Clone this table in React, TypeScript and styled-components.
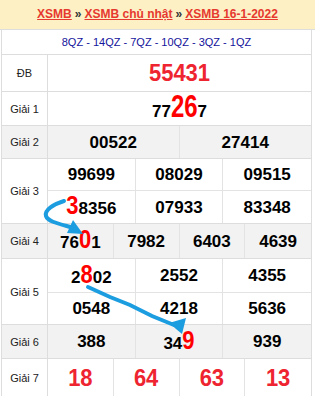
import styled, { createGlobalStyle } from "styled-components";

const GlobalStyle = createGlobalStyle`
  html, body {
    margin: 0;
    padding: 0;
    background: #ffffff;
  }
  body {
    font-family: "Liberation Sans", Arial, sans-serif;
  }
`;

type Prize = {
  label: string;
  cols: number;
  height: number;
  firstRow?: number;
  alt?: boolean;
  kind?: "db" | "g7";
  values: string[];
};

// so trong [] la chu so duoc to do, {} la to do va to hon
const prizes: Prize[] = [
  { label: "ĐB", cols: 1, height: 37, kind: "db", values: ["55431"] },
  { label: "Giải 1", cols: 1, height: 34, values: ["77{26}7"] },
  { label: "Giải 2", cols: 2, height: 33, alt: true, values: ["00522", "27414"] },
  {
    label: "Giải 3",
    cols: 3,
    height: 65,
    firstRow: 32,
    values: ["99699", "08029", "09515", "[3]8356", "07933", "83348"],
  },
  { label: "Giải 4", cols: 4, height: 35, alt: true, values: ["76[0]1", "7982", "6403", "4639"] },
  {
    label: "Giải 5",
    cols: 3,
    height: 66,
    firstRow: 34,
    values: ["2[8]02", "2552", "4355", "0548", "4218", "5636"],
  },
  { label: "Giải 6", cols: 3, height: 34, alt: true, values: ["388", "34[9]", "939"] },
  { label: "Giải 7", cols: 4, height: 38, kind: "g7", values: ["18", "64", "63", "13"] },
];

const renderNumber = (value: string) =>
  value.split(/(\[[0-9]+\]|\{[0-9]+\})/).map((part, idx) => {
    if (!part) return null;
    if (part.startsWith("[")) return <Hl key={idx}>{part.slice(1, -1)}</Hl>;
    if (part.startsWith("{")) return <Hl key={idx} $big>{part.slice(1, -1)}</Hl>;
    return <span key={idx}>{part}</span>;
  });

const App = () => {
  return (
    <Page>
      <GlobalStyle />
      <Header>
        <Crumb href="#">XSMB</Crumb>
        <Sep>»</Sep>
        <Crumb href="#">XSMB chủ nhật</Crumb>
        <Sep>»</Sep>
        <Crumb href="#">XSMB 16-1-2022</Crumb>
      </Header>
      <Table>
        <CodeRow>8QZ - 14QZ - 7QZ - 10QZ - 3QZ - 1QZ</CodeRow>
        {prizes.map((p) => (
          <PrizeRow key={p.label} $h={p.height} $alt={!!p.alt}>
            <Label>{p.label}</Label>
            <Cells $cols={p.cols} $firstRow={p.firstRow}>
              {p.values.map((v, i) => (
                <Cell key={i} $cols={p.cols} $split={!!p.firstRow}>
                  <Num $kind={p.kind}>{renderNumber(v)}</Num>
                </Cell>
              ))}
            </Cells>
          </PrizeRow>
        ))}
      </Table>
      <Arrows width="315" height="396" viewBox="0 0 315 396">
        <path
          d="M64 201 C 54 204, 44 210, 46 216 C 48 222, 60 224, 74 228"
          fill="none"
          stroke="#1b9de0"
          strokeWidth="4"
          strokeLinecap="round"
        />
        <polygon points="83,234 73,220 67,233" fill="#1b9de0" />
        <path
          d="M88 287 L 110 297 L 130 305 L 152 316 L 174 325"
          fill="none"
          stroke="#1b9de0"
          strokeWidth="4"
          strokeLinecap="round"
        />
        <polygon points="182,334 186,318 169,323" fill="#1b9de0" />
      </Arrows>
    </Page>
  );
};

export default App;

const Page = styled.div`
  position: relative;
  width: 315px;
  height: 396px;
  overflow: hidden;
  background: #ffffff;
`;

const Header = styled.div`
  display: flex;
  align-items: center;
  justify-content: center;
  height: 30px;
  box-sizing: border-box;
  padding-bottom: 1px;
  background: #fcf0c4;
  border-bottom: 1px solid #dddddd;
`;

const Crumb = styled.a`
  color: #e6392f;
  font-size: 12px;
  font-weight: bold;
  text-decoration: underline;
`;

const Sep = styled.span`
  margin: 0 3px;
  color: #333333;
  font-size: 12px;
  font-weight: bold;
`;

const Table = styled.div`
  margin-left: 1px;
  width: 311px;
  box-sizing: border-box;
  border-left: 1px solid #dddddd;
  border-right: 1px solid #dddddd;
`;

const CodeRow = styled.div`
  display: flex;
  align-items: center;
  justify-content: center;
  height: 25px;
  box-sizing: border-box;
  border-bottom: 1px solid #dddddd;
  color: #14149c;
  font-size: 11px;
`;

const PrizeRow = styled.div<{ $h: number; $alt: boolean }>`
  display: grid;
  grid-template-columns: 46px 1fr;
  height: ${({ $h }) => $h}px;
  box-sizing: border-box;
  border-bottom: 1px solid #dddddd;
  background: ${({ $alt }) => ($alt ? "#f2f2f2" : "#ffffff")};
`;

const Label = styled.div`
  display: flex;
  align-items: center;
  justify-content: center;
  border-right: 1px solid #dddddd;
  color: #222222;
  font-size: 11px;
`;

const Cells = styled.div<{ $cols: number; $firstRow?: number }>`
  display: grid;
  grid-template-columns: repeat(${({ $cols }) => $cols}, 1fr);
  grid-template-rows: ${({ $firstRow }) => ($firstRow ? `${$firstRow}px 1fr` : "1fr")};
`;

const Cell = styled.div<{ $cols: number; $split: boolean }>`
  display: flex;
  align-items: center;
  justify-content: center;
  box-sizing: border-box;
  border-right: 1px solid #e3e3e3;

  &:nth-child(${({ $cols }) => $cols}n) {
    border-right: none;
  }

  &:nth-child(-n + ${({ $cols }) => $cols}) {
    border-bottom: ${({ $split }) => ($split ? "1px solid #e3e3e3" : "none")};
  }
`;

const Num = styled.span<{ $kind?: "db" | "g7" }>`
  display: inline-flex;
  align-items: baseline;
  color: ${({ $kind }) => ($kind ? "#ee2430" : "#000000")};
  font-size: ${({ $kind }) => ($kind ? "22px" : "17px")};
  font-weight: bold;
  line-height: 1;
  transform: ${({ $kind }) => ($kind ? "scaleY(1.12)" : "none")};
`;

const Hl = styled.span<{ $big?: boolean }>`
  display: inline-block;
  color: #ff0000;
  font-size: ${({ $big }) => ($big ? "24px" : "22px")};
  line-height: 1;
  transform-origin: 50% 85%;
  transform: ${({ $big }) => ($big ? "scaleY(1.3)" : "scaleY(1.2)")};
`;

const Arrows = styled.svg`
  position: absolute;
  top: 0;
  left: 0;
  pointer-events: none;
`;
